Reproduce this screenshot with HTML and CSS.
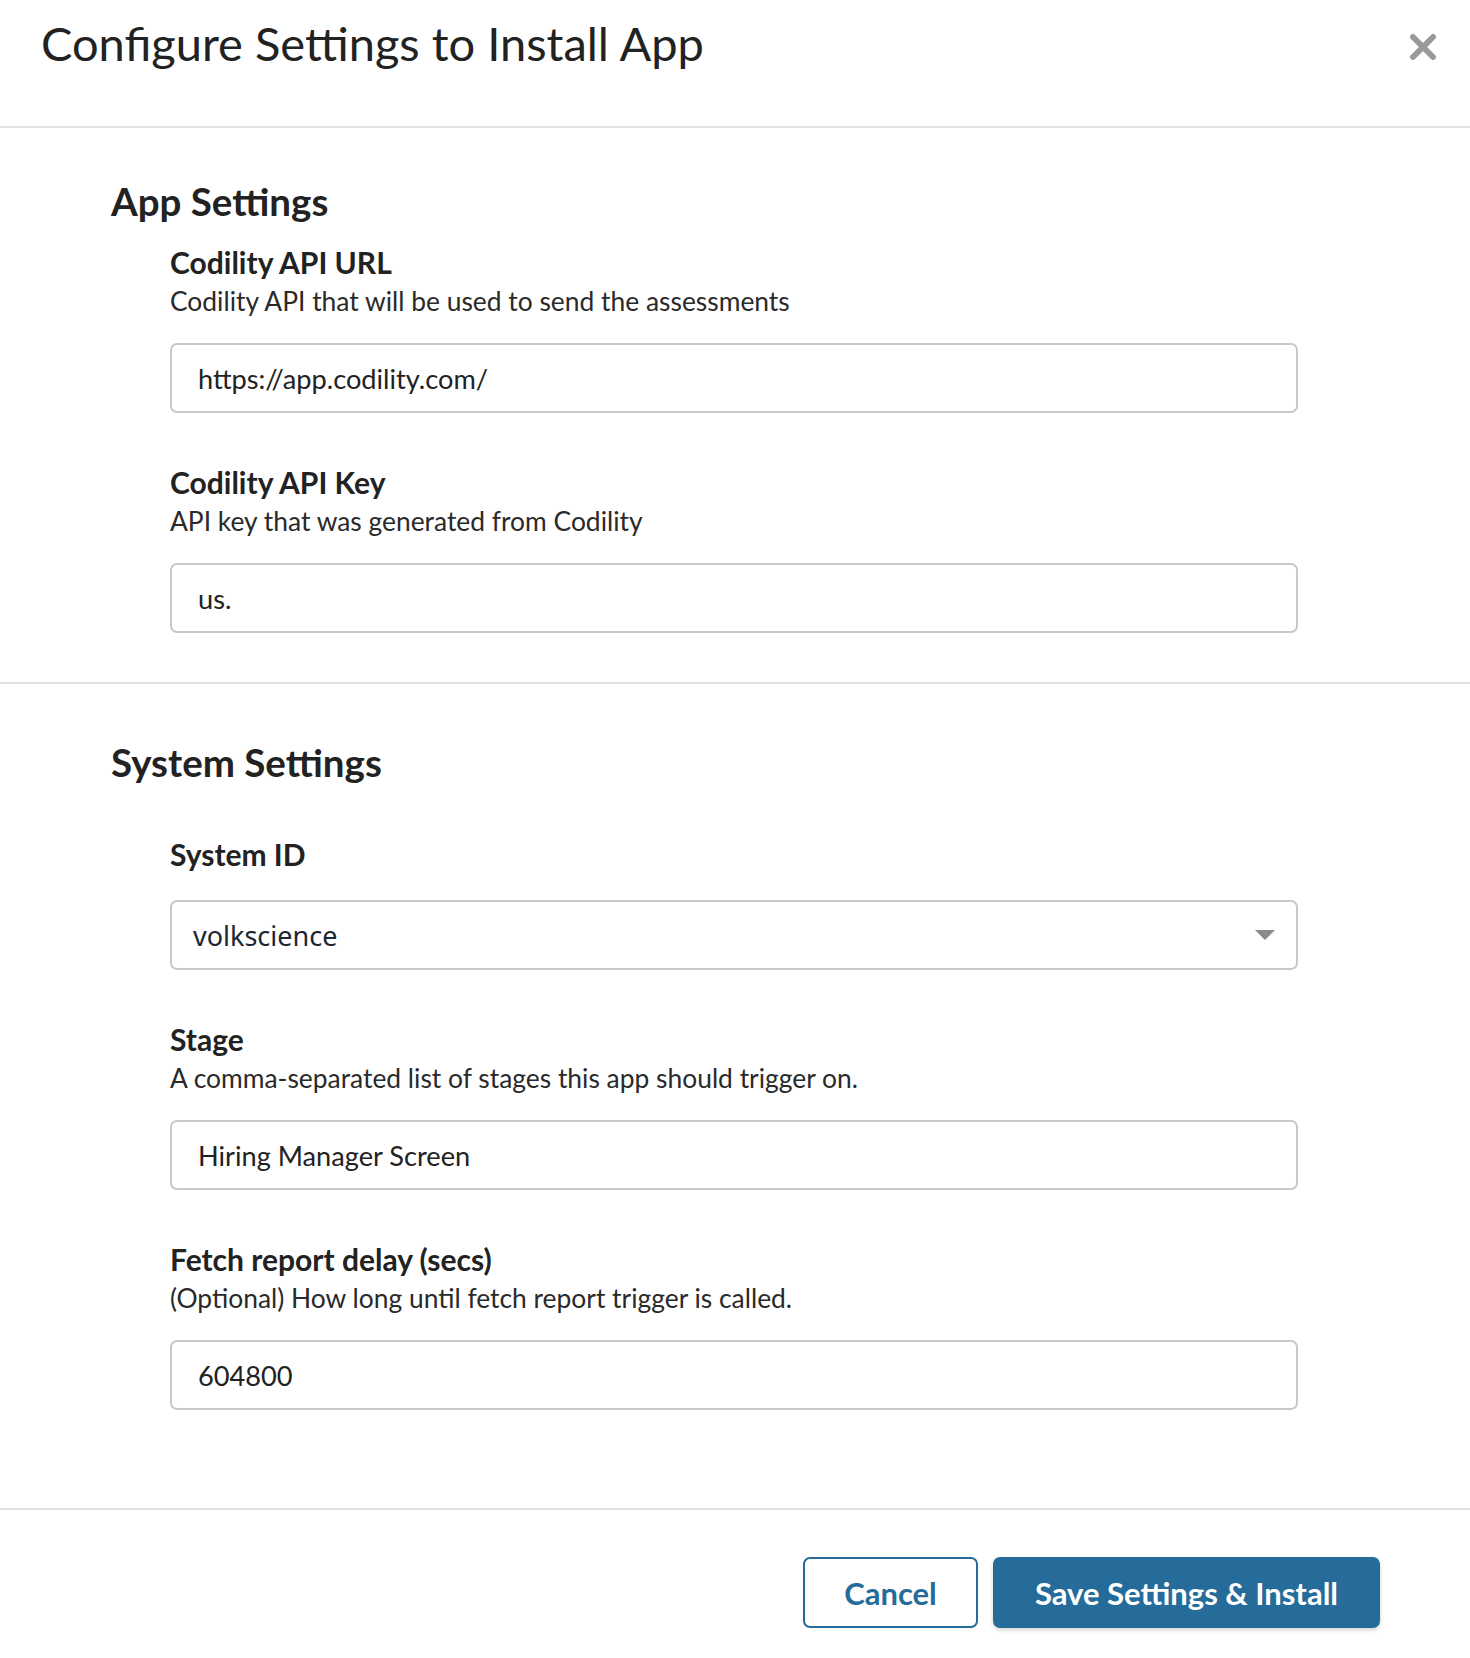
FILE: index.html
```html
<!DOCTYPE html>
<html lang="en">
<head>
<meta charset="utf-8">
<title>Configure Settings to Install App</title>
<link rel="stylesheet" href="styles.css">
</head>
<body>
<div class="modal">
  <header class="modal-header">
    <h1 class="modal-title">Configure Settings to Install App</h1>
    <button class="close-btn" aria-label="Close">
      <svg width="28" height="28" viewBox="0 0 28 28"><path d="M4 4 L24 24 M24 4 L4 24" stroke="#9a9a9a" stroke-width="6" stroke-linecap="round" fill="none"/></svg>
    </button>
  </header>

  <section class="settings-section section-app">
    <h2 class="section-title">App Settings</h2>
    <div class="field">
      <div class="field-label">Codility API URL</div>
      <div class="field-desc">Codility API that will be used to send the assessments</div>
      <div class="text-input">https://app.codility.com/</div>
    </div>
    <div class="field">
      <div class="field-label">Codility API Key</div>
      <div class="field-desc">API key that was generated from Codility</div>
      <div class="text-input">us.</div>
    </div>
  </section>

  <section class="settings-section section-system">
    <h2 class="section-title">System Settings</h2>
    <div class="field field-spaced">
      <div class="field-label">System ID</div>
      <div class="select-input">
        <span class="select-value">volkscience</span>
        <span class="select-caret"></span>
      </div>
    </div>
    <div class="field">
      <div class="field-label">Stage</div>
      <div class="field-desc">A comma-separated list of stages this app should trigger on.</div>
      <div class="text-input">Hiring Manager Screen</div>
    </div>
    <div class="field">
      <div class="field-label">Fetch report delay (secs)</div>
      <div class="field-desc">(Optional) How long until fetch report trigger is called.</div>
      <div class="text-input">604800</div>
    </div>
  </section>

  <footer class="modal-footer">
    <button class="btn btn-secondary">Cancel</button>
    <button class="btn btn-primary">Save Settings &amp; Install</button>
  </footer>
</div>
</body>
</html>
```
FILE: styles.css
```css
* { box-sizing: border-box; }

html, body {
  margin: 0;
  padding: 0;
  background: #ffffff;
}

body {
  font-family: "Lato", "Open Sans", "Liberation Sans", sans-serif;
  color: #222222;
}

.modal {
  width: 1470px;
  min-height: 1658px;
  display: flex;
  flex-direction: column;
}

.modal-header {
  height: 128px;
  padding: 15px 33px 0 41px;
  display: flex;
  justify-content: space-between;
  align-items: flex-start;
  border-bottom: 2px solid #e2e2e2;
}

.modal-title {
  margin: 0;
  font-size: 47px;
  font-weight: 400;
  line-height: 1.2;
  color: #222222;
}

.close-btn {
  margin-top: 18px;
  padding: 0;
  border: 0;
  background: none;
  width: 28px;
  height: 28px;
  display: flex;
}

.settings-section {
  padding: 50px 112px 0 111px;
  border-bottom: 2px solid #e2e2e2;
}

.section-app { padding-bottom: 49px; }
.section-system { padding-top: 55px; padding-bottom: 98px; }

.section-title {
  margin: 0;
  font-size: 38.5px;
  font-weight: 700;
  line-height: 1.2;
  color: #222222;
}

.field {
  padding: 0 60px 0 59px;
  margin-top: 52px;
}

.section-title + .field { margin-top: 21px; }
.section-title + .field-spaced { margin-top: 52px; }

.field-label {
  font-size: 30px;
  font-weight: 700;
  line-height: 34px;
  color: #222222;
}

.field-desc {
  margin-top: 4px;
  font-size: 26.4px;
  line-height: 36px;
  color: #2a2a2a;
}

.text-input {
  margin-top: 24px;
  height: 70px;
  border: 2px solid #c8c8c8;
  border-radius: 7px;
  padding: 0 26px;
  display: flex;
  align-items: center;
  font-size: 27.2px;
  color: #222222;
}

.select-input {
  margin-top: 29px;
  height: 70px;
  border: 2px solid #c8c8c8;
  border-radius: 7px;
  padding: 0 21px 0 21px;
  display: flex;
  align-items: center;
  justify-content: space-between;
}

.select-value {
  font-family: "Noto Sans", "Open Sans", sans-serif;
  font-size: 27px;
  color: #1d2533;
}

.select-caret {
  width: 0;
  height: 0;
  border-left: 10px solid transparent;
  border-right: 10px solid transparent;
  border-top: 10px solid #8a8a8a;
}

.modal-footer {
  padding: 47px 90px 30px 0;
  display: flex;
  justify-content: flex-end;
  gap: 15px;
}

.btn {
  height: 71px;
  border-radius: 7px;
  font-family: "Lato", "Open Sans", sans-serif;
  font-size: 31px;
  font-weight: 700;
  cursor: pointer;
}

.btn-secondary {
  width: 175px;
  background: #ffffff;
  border: 2px solid #266c9a;
  color: #266c9a;
}

.btn-primary {
  width: 387px;
  background: #266c9a;
  border: 2px solid #266c9a;
  color: #ffffff;
  box-shadow: 0 2px 4px rgba(0, 0, 0, 0.18);
}
```
